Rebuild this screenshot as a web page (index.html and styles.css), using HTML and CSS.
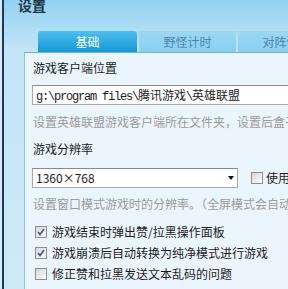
FILE: index.html
```html
<!DOCTYPE html>
<html lang="zh-CN">
<head>
    <meta charset="UTF-8">
    <title>设置</title>
    <link rel="stylesheet" href="styles.css">
</head>
<body>
    <div class="window">
        <div class="edge"></div>
        <div class="main">
            <div class="title">设置</div>

            <div class="tabs">
                <div class="tab active">基础</div>
                <div class="tab">野怪计时</div>
                <div class="tab">对阵信息</div>
            </div>

            <div class="panel">
                <div class="label">游戏客户端位置</div>
                <div class="field path"><span class="mono">g:\program files\</span>腾讯游戏<span class="mono">\</span>英雄联盟</div>
                <div class="help">设置英雄联盟游戏客户端所在文件夹，设置后盒子将自动识别</div>

                <div class="label gap">游戏分辨率</div>
                <div class="res-row">
                    <div class="field select">
                        <span>1360×768</span>
                        <span class="arrow"></span>
                    </div>
                    <label class="check use">
                        <span class="box"></span>
                        <span>使用窗口模式</span>
                    </label>
                </div>
                <div class="help help2">设置窗口模式游戏时的分辨率。（全屏模式会自动调整）</div>

                <!-- options -->
                <div class="options">
                    <label class="check">
                        <span class="box on"><svg width="10" height="10" viewBox="0 0 10 10"><path d="M2 5 L4 7.5 L8 2" fill="none" stroke="#3f6490" stroke-width="1.8"/></svg></span>
                        <span>游戏结束时弹出赞/拉黑操作面板</span>
                    </label>
                    <label class="check">
                        <span class="box on"><svg width="10" height="10" viewBox="0 0 10 10"><path d="M2 5 L4 7.5 L8 2" fill="none" stroke="#3f6490" stroke-width="1.8"/></svg></span>
                        <span>游戏崩溃后自动转换为纯净模式进行游戏</span>
                    </label>
                    <label class="check">
                        <span class="box"></span>
                        <span>修正赞和拉黑发送文本乱码的问题</span>
                    </label>
                </div>
            </div>
        </div>
    </div>
</body>
</html>
```

FILE: styles.css
```css
body {
    margin: 0;
    padding: 0;
    width: 288px;
    height: 289px;
    overflow: hidden;
    font-family: "Noto Sans CJK SC", "Liberation Sans", sans-serif;
    font-size: 12px;
    color: #1c1c1c;
}

.window {
    display: flex;
    height: 289px;
}

.edge {
    width: 2px;
    flex: none;
    background-color: #d6ebf7;
}

.main {
    flex: 1;
    min-width: 0;
    border-left: 2px solid #1d3b58;
    padding-left: 20px;
    background: linear-gradient(#93d2f2, #c3e5f7 50px, #cfe9f7);
    overflow: hidden;
}

.title {
    height: 31px;
    margin-left: -6px;
    font-size: 14px;
    font-weight: bold;
    line-height: 10px;
    color: #223346;
}

/* Onglets */
.tabs {
    display: flex;
    gap: 2px;
    margin-left: 14px;
    height: 21px;
}

.tab {
    flex: none;
    width: 97px;
    text-align: center;
    line-height: 21px;
    color: #4f86ae;
    background: linear-gradient(#9bd8f4, #88cfef);
    white-space: nowrap;
}

.tab.active {
    width: 99px;
    color: white;
    border-radius: 3px 3px 0 0;
    background: linear-gradient(#4cc0f0, #1797d4);
}

.panel {
    border-top: 1px solid #6fb1d3;
    border-left: 1px solid #8cc3d6;
    background-color: #ebf5fd;
    padding: 8px 0 20px 8px;
    height: 300px;
    white-space: nowrap;
}

.label {
    line-height: 14px;
}

.label.gap {
    margin-top: 13px;
}

.field {
    box-sizing: border-box;
    height: 20px;
    margin-left: -1px;
    border: 1px solid #a9a9a9;
    border-top-color: #8a8a8a;
    background-color: white;
    line-height: 18px;
    padding-left: 3px;
}

.path {
    margin-top: 10px;
    width: 300px;
    overflow: hidden;
}

.mono {
    font-family: "Liberation Mono", monospace;
    letter-spacing: -1.2px;
}

.help {
    margin-top: 10px;
    line-height: 14px;
    color: #9b9b9b;
}

.help2 {
    margin-top: 9px;
}

.res-row {
    display: flex;
    align-items: center;
    margin-top: 12px;
}

.select {
    flex: none;
    width: 206px;
    display: flex;
    justify-content: space-between;
    align-items: center;
    padding-right: 3px;
}

.arrow {
    width: 0;
    height: 0;
    border-left: 3.5px solid transparent;
    border-right: 3.5px solid transparent;
    border-top: 4px solid #111;
}

.check {
    display: flex;
    align-items: center;
    gap: 5px;
    height: 20px;
    line-height: 14px;
}

.check.use {
    flex: none;
    margin-left: 13px;
    gap: 3px;
}

.box {
    box-sizing: border-box;
    width: 12px;
    height: 12px;
    flex: none;
    border: 1px solid #8e8e8e;
    background: linear-gradient(135deg, #d8d8d8, #fbfbfb);
    display: flex;
    align-items: center;
    justify-content: center;
}

.options {
    margin-top: 11px;
    padding-left: 2px;
    display: flex;
    flex-direction: column;
    gap: 1px;
}
```
